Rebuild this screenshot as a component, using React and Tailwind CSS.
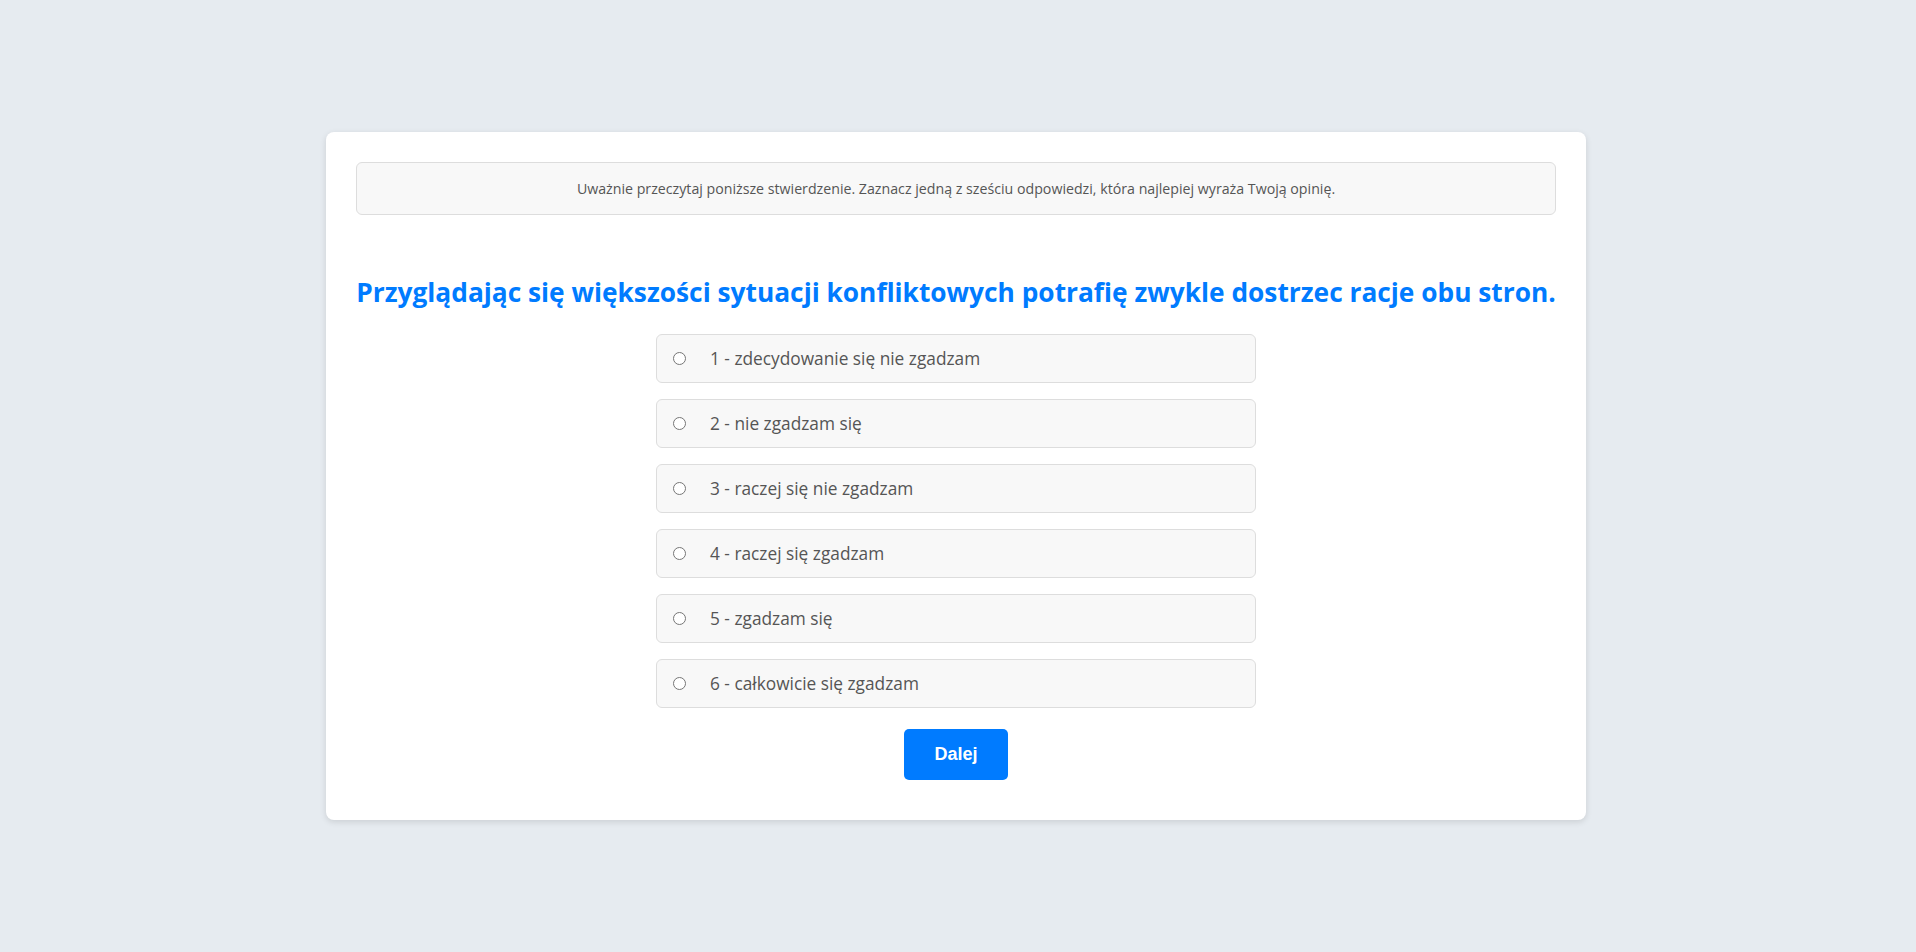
import React, { useState } from "react";

const options = [
  "1 - zdecydowanie się nie zgadzam",
  "2 - nie zgadzam się",
  "3 - raczej się nie zgadzam",
  "4 - raczej się zgadzam",
  "5 - zgadzam się",
  "6 - całkowicie się zgadzam",
];

export default function App() {
  const [sel, setSel] = useState(null);
  return (
    <div className="min-h-[952px] bg-[#e6ebf0] flex justify-center pr-[4px] pt-[132px] font-['Open_Sans',sans-serif]">
      <div className="w-[1260px] h-[688px] bg-white rounded-[8px] shadow-[0_2px_6px_rgba(0,0,0,0.12)] p-[30px] flex flex-col items-center">
        <div className="w-full h-[53px] bg-[#f8f8f8] border border-[#dddddd] rounded-[6px] flex items-center justify-center text-[14.2px] text-[#555555]">
          Uważnie przeczytaj poniższe stwierdzenie. Zaznacz jedną z sześciu odpowiedzi, która najlepiej wyraża Twoją opinię.
        </div>
        <h2 className="mt-[60px] mb-[25px] text-[26.3px] leading-[34px] font-bold text-[#007bff] whitespace-nowrap text-center">
          Przyglądając się większości sytuacji konfliktowych potrafię zwykle dostrzec racje obu stron.
        </h2>
        <div className="flex flex-col gap-[16px] w-[600px]">
          {options.map((o, i) => (
            <label
              key={i}
              className="h-[49px] bg-[#f8f8f8] border border-[#dddddd] rounded-[6px] flex items-center pl-[16px] cursor-pointer"
            >
              <span className="w-[13px] h-[13px] rounded-full border border-[#767676] bg-white flex items-center justify-center">
                {sel === i && <span className="w-[7px] h-[7px] rounded-full bg-[#007bff]" />}
              </span>
              <input type="radio" name="q" className="hidden" checked={sel === i} onChange={() => setSel(i)} />
              <span className="ml-[24px] text-[17.3px] text-[#555555]">{o}</span>
            </label>
          ))}
        </div>
        <button className="mt-[21px] h-[51px] px-[30px] bg-[#007bff] text-white rounded-[5px] font-bold text-[18px] font-['Liberation_Sans',sans-serif]">
          Dalej
        </button>
      </div>
    </div>
  );
}
